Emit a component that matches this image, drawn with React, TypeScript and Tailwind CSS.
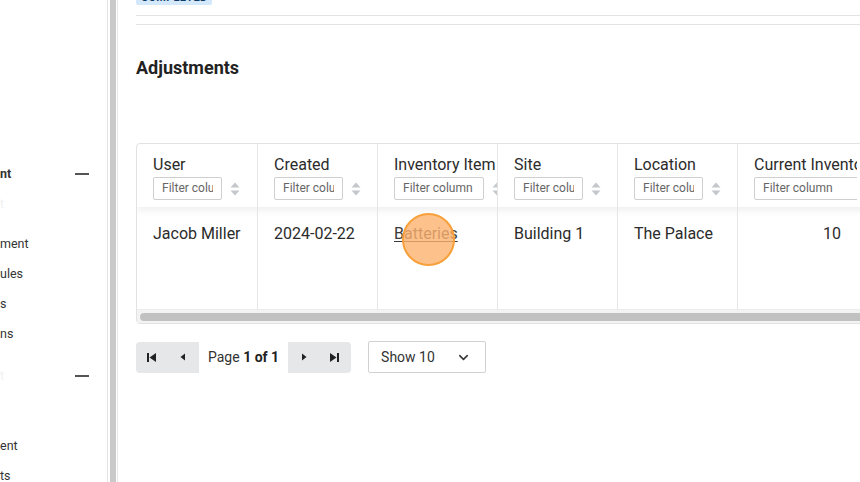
import { ChevronDown } from "lucide-react"

const columns = [
  { title: "User", value: "Jacob Miller", input: "w-[69px]" },
  { title: "Created", value: "2024-02-22", input: "w-[69px]" },
  { title: "Inventory Item", value: "Batteries", input: "w-[90px]", link: true },
  { title: "Site", value: "Building 1", input: "w-[69px]" },
  { title: "Location", value: "The Palace", input: "w-[69px]" },
  { title: "Current Inventory", value: "10", input: "w-[120px]", right: true, noSort: true },
]

const SortIcon = () => (
  <svg width="10" height="14" viewBox="0 0 10 14" className="shrink-0">
    <path d="M5 0.5 L9.5 5.5 H0.5 Z" fill="#c4c7cc" />
    <path d="M5 13.5 L9.5 8.5 H0.5 Z" fill="#c4c7cc" />
  </svg>
)

const sideRows = [
  { text: "nt", bold: true, minus: true, h: "h-[30px]" },
  { text: "t", faint: true, h: "h-[40px]" },
  { text: "ment", h: "h-[30px]" },
  { text: "ules", h: "h-[30px]" },
  { text: "s", h: "h-[30px]" },
  { text: "ns", h: "h-[42px]" },
  { text: "t", faint: true, minus: true, h: "h-[70px]" },
  { text: "ent", h: "h-[30px]" },
  { text: "ts", h: "h-[30px]" },
]

export default function App() {
  return (
    <div className="flex h-[482px] w-[860px] overflow-hidden bg-white font-['Roboto',sans-serif] text-[#2b2b2b]">
      <aside className="w-[108px] shrink-0 overflow-hidden border-r border-[#e4e4e4] pt-[159px] text-[12.5px]">
        {sideRows.map((r, i) => (
          <div key={i} className={`flex items-start justify-between pr-[18px] ${r.h}`}>
            <span
              className={`leading-[30px] ${r.bold ? "font-bold text-[#222]" : ""} ${r.faint ? "text-[#f2f2f2]" : "text-[#333]"}`}
            >
              {r.text}
            </span>
            {r.minus && <span className="mt-[14px] h-[1.5px] w-[14px] bg-[#555]" />}
          </div>
        ))}
      </aside>
      <div className="flex w-[10px] shrink-0 border-r border-[#e8e8e8]">
        <div className="ml-[2px] w-[6px] bg-[#c9c9c9]" />
      </div>

      <main className="relative min-w-0 flex-1 overflow-hidden pl-[18px]">
        <div className="flex h-[16px] items-end border-b border-[#e3e3e3] pb-[10px]">
          <span className="rounded-[2px] bg-[#d3e8fa] px-[5px] text-[11px] font-semibold leading-[14px] tracking-wide text-[#0e3a63]">
            COMPLETED
          </span>
        </div>
        <div className="h-[9px] border-b border-[#e3e3e3]" />

        <h2 className="mt-[31px] text-[18px] font-bold leading-[24px] text-[#222]">Adjustments</h2>

        <div className="mt-[63px] w-[760px] overflow-hidden rounded-[4px] border border-[#e2e2e2]">
          <div className="flex shadow-[0_4px_6px_rgba(0,0,0,0.06)]">
            {columns.map((c, i) => (
              <div
                key={c.title}
                className={`h-[63px] w-[120px] shrink-0 overflow-hidden pl-[16px] pt-[11px] ${i > 0 ? "border-l border-[#e6e6e6]" : ""}`}
              >
                <div className="whitespace-nowrap text-[16px] leading-[20px] text-[#2b2b2b]">{c.title}</div>
                <div className="mt-[2px] flex items-center gap-[8px]">
                  <div
                    className={`${c.input} h-[23px] shrink-0 rounded-[2px] border border-[#cfcfcf] px-[8px] text-[12px] leading-[21px] text-[#666]`}
                  >
                    <div className="overflow-hidden whitespace-nowrap">Filter column</div>
                  </div>
                  {!c.noSort && <SortIcon />}
                </div>
              </div>
            ))}
          </div>
          <div className="flex">
            {columns.map((c, i) => (
              <div
                key={c.title}
                className={`h-[102px] w-[120px] shrink-0 px-[16px] pt-[17px] text-[16px] leading-[20px] ${i > 0 ? "border-l border-[#e6e6e6]" : ""} ${c.right ? "text-right" : ""}`}
              >
                {c.link ? <span className="text-[#3a3a3a] underline underline-offset-2">{c.value}</span> : c.value}
              </div>
            ))}
          </div>
          <div className="flex h-[14px] items-center border-t border-[#ececec] bg-[#f3f3f3] px-[3px]">
            <div className="h-[8px] w-full rounded-full bg-[#c1c1c1]" />
          </div>
        </div>

        <div className="mt-[17px] flex items-center gap-[17px]">
          <div className="flex h-[31px] items-center overflow-hidden rounded-[4px]">
            <div className="flex h-full w-[63px] items-center bg-[#e6e7e9]">
              <button className="flex h-full w-[31px] items-center justify-center">
                <svg width="11" height="11" viewBox="0 0 11 11">
                  <rect x="1" y="1" width="2" height="9" fill="#222" />
                  <path d="M10 1 V10 L3.5 5.5 Z" fill="#222" />
                </svg>
              </button>
              <button className="flex h-full w-[31px] items-center justify-center">
                <svg width="8" height="10" viewBox="0 0 8 10">
                  <path d="M6 1.5 V8.5 L1.5 5 Z" fill="#222" />
                </svg>
              </button>
            </div>
            <span className="px-[9px] text-[14px] text-[#333]">
              Page <b className="font-bold text-[#222]">1 of 1</b>
            </span>
            <div className="flex h-full w-[63px] items-center bg-[#e6e7e9]">
              <button className="flex h-full w-[31px] items-center justify-center">
                <svg width="8" height="10" viewBox="0 0 8 10">
                  <path d="M2 1.5 V8.5 L6.5 5 Z" fill="#222" />
                </svg>
              </button>
              <button className="flex h-full w-[31px] items-center justify-center">
                <svg width="11" height="11" viewBox="0 0 11 11">
                  <path d="M1 1 V10 L7.5 5.5 Z" fill="#222" />
                  <rect x="8" y="1" width="2" height="9" fill="#222" />
                </svg>
              </button>
            </div>
          </div>
          <div className="flex h-[32px] w-[118px] items-center justify-between rounded-[2px] border border-[#d2d2d2] pl-[12px] pr-[14px] text-[14px] text-[#333]">
            Show 10
            <ChevronDown size={15} strokeWidth={2.4} className="text-[#333]" />
          </div>
        </div>

        <div className="absolute left-[284px] top-[213px] h-[53px] w-[53px] rounded-full border-2 border-[#f7a03a] bg-[#fdb26f]/80" />
      </main>
    </div>
  )
}
